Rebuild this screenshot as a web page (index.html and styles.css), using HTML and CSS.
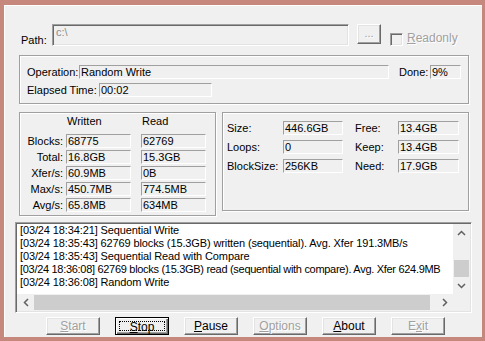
FILE: index.html
```html
<!DOCTYPE html>
<html lang="en">
<head>
    <meta charset="UTF-8">
    <title>H2testw</title>
    <link rel="stylesheet" href="styles.css">
</head>
<body>
    <div class="frame">
        <div class="dialog">
            <div class="path-row">
                <span class="path-label">Path:</span>
                <div class="path-input">c:\</div>
                <div class="btn btn-browse disabled">...</div>
                <span class="check"></span>
                <span class="check-label disabled"><u>R</u>eadonly</span>
            </div>

            <div class="group group-op">
                <div class="op-row">
                    <span class="lbl-op">Operation:</span>
                    <span class="field field-op">Random Write</span>
                    <span class="lbl-done">Done:</span>
                    <span class="field field-done">9%</span>
                </div>
                <div class="op-row second">
                    <span class="lbl-elapsed">Elapsed Time:</span>
                    <span class="field field-elapsed">00:02</span>
                </div>
            </div>

            <div class="groups">
                <div class="group group-stats">
                    <span></span>
                    <span class="head">Written</span>
                    <span class="head">Read</span>

                    <span class="lbl">Blocks:</span>
                    <span class="field">68775</span>
                    <span class="field">62769</span>

                    <span class="lbl">Total:</span>
                    <span class="field">16.8GB</span>
                    <span class="field">15.3GB</span>

                    <span class="lbl">Xfer/s:</span>
                    <span class="field">60.9MB</span>
                    <span class="field">0B</span>

                    <span class="lbl">Max/s:</span>
                    <span class="field">450.7MB</span>
                    <span class="field">774.5MB</span>

                    <span class="lbl">Avg/s:</span>
                    <span class="field">65.8MB</span>
                    <span class="field">634MB</span>
                </div>

                <div class="group group-disk">
                    <span class="lbl">Size:</span>
                    <span class="field">446.6GB</span>
                    <span class="lbl">Free:</span>
                    <span class="field">13.4GB</span>

                    <span class="lbl">Loops:</span>
                    <span class="field">0</span>
                    <span class="lbl">Keep:</span>
                    <span class="field">13.4GB</span>

                    <span class="lbl">BlockSize:</span>
                    <span class="field">256KB</span>
                    <span class="lbl">Need:</span>
                    <span class="field">17.9GB</span>
                </div>
            </div>

            <div class="log">
                <div class="log-text">
                    <div>[03/24 18:34:21] Sequential Write</div>
                    <div>[03/24 18:35:43] 62769 blocks (15.3GB) written (sequential). Avg. Xfer 191.3MB/s</div>
                    <div>[03/24 18:35:43] Sequential Read with Compare</div>
                    <div class="long">[03/24 18:36:08] 62769 blocks (15.3GB) read (sequential with compare). Avg. Xfer 624.9MB</div>
                    <div>[03/24 18:36:08] Random Write</div>
                </div>
                <div class="vscroll">
                    <div class="arrow">
                        <svg width="9" height="6" viewBox="0 0 9 6"><polyline points="1,5 4.5,1.5 8,5" fill="none" stroke="#606060" stroke-width="1.5"/></svg>
                    </div>
                    <div class="vtrack"><div class="vthumb"></div></div>
                    <div class="arrow">
                        <svg width="9" height="6" viewBox="0 0 9 6"><polyline points="1,1 4.5,4.5 8,1" fill="none" stroke="#606060" stroke-width="1.5"/></svg>
                    </div>
                </div>
                <div class="hscroll">
                    <div class="arrow">
                        <svg width="6" height="9" viewBox="0 0 6 9"><polyline points="5,1 1.5,4.5 5,8" fill="none" stroke="#606060" stroke-width="1.5"/></svg>
                    </div>
                    <div class="htrack"><div class="hthumb"></div></div>
                    <div class="arrow">
                        <svg width="6" height="9" viewBox="0 0 6 9"><polyline points="1,1 4.5,4.5 1,8" fill="none" stroke="#606060" stroke-width="1.5"/></svg>
                    </div>
                </div>
                <div class="corner"></div>
            </div>

            <div class="buttons">
                <div class="btn disabled"><u>S</u>tart</div>
                <div class="btn default"><span class="focus"><u>S</u>top</span></div>
                <div class="btn"><u>P</u>ause</div>
                <div class="btn disabled"><u>O</u>ptions</div>
                <div class="btn"><u>A</u>bout</div>
                <div class="btn disabled">E<u>x</u>it</div>
            </div>
        </div>
    </div>
</body>
</html>
```

FILE: styles.css
```css
body {
    margin: 0;
    background: #c6877d;
    font-family: "Liberation Sans", Arial, sans-serif;
    font-size: 11px;
    color: #000;
}
.frame {
    height: 341px;
    padding: 5px 3px 4px 4px;
    box-sizing: border-box;
}
.dialog {
    height: 100%;
    background: #f0f0f0;
    border-top: 1px solid #fff;
    border-left: 1px solid #fff;
    box-sizing: border-box;
    padding: 18px 0 0 10px;
}
.disabled {
    color: #a0a0a0;
    text-shadow: 1px 1px #fff;
}

/* buttons */
.buttons {
    display: flex;
    gap: 15px;
    margin: 4px 0 0 31px;
}
.btn {
    width: 54px;
    height: 18px;
    box-sizing: border-box;
    border: 1px solid;
    border-color: #fff #696969 #696969 #fff;
    box-shadow: inset -1px -1px #a0a0a0, inset 1px 1px #e3e3e3;
    text-align: center;
    line-height: 16px;
    font-size: 12px;
}
.btn.default {
    border: 1px solid #000;
    box-shadow: inset 1px 1px #fff, inset -1px -1px #696969, inset -2px -2px #a0a0a0;
    padding: 3px;
    line-height: 10px;
}
.btn .focus {
    display: block;
    height: 100%;
    box-sizing: border-box;
    border: 1px dotted #000;
}

/* path line */
.path-row {
    display: flex;
    align-items: flex-start;
    height: 22px;
    margin-left: 4px;
}
.path-label {
    width: 31px;
    padding: 10px 0 0 2px;
    line-height: 13px;
}
.path-input {
    width: 297px;
    height: 22px;
    box-sizing: border-box;
    border: 1px solid;
    border-color: #a0a0a0 #fff #fff #a0a0a0;
    box-shadow: inset 1px 1px #696969, inset -1px -1px #e3e3e3;
    color: #8c8c8c;
    padding: 1px 3px;
    line-height: 13px;
}
.path-row .btn-browse {
    margin-left: 8px;
    width: 24px;
    height: 20px;
    line-height: 16px;
    font-size: 11px;
}
.check {
    margin: 9px 0 0 9px;
    width: 13px;
    height: 13px;
    box-sizing: border-box;
    border: 1px solid;
    border-color: #a0a0a0 #fff #fff #a0a0a0;
    box-shadow: inset 1px 1px #696969, inset -1px -1px #e3e3e3;
}
.check-label {
    margin: 8px 0 0 4px;
    line-height: 13px;
    font-size: 12px;
}

/* group boxes */
.group {
    border: 1px solid #a0a0a0;
    box-shadow: inset 1px 1px #fff, 1px 1px #fff;
    box-sizing: border-box;
}
.field {
    height: 14px;
    box-sizing: border-box;
    border: 1px solid;
    border-color: #a0a0a0 #fff #fff #a0a0a0;
    line-height: 12px;
    padding-left: 1px;
    white-space: nowrap;
    overflow: hidden;
}
.group-op {
    margin: 9px 0 0 4px;
    width: 450px;
    height: 49px;
    padding: 9px 0 0 7px;
}
.op-row {
    display: flex;
    align-items: center;
    height: 14px;
}
.op-row.second {
    margin-top: 4px;
}
.lbl-op {
    width: 52px;
}
.field-op {
    width: 310px;
}
.lbl-done {
    width: 31px;
    margin-left: 10px;
}
.field-done {
    width: 31px;
}
.lbl-elapsed {
    width: 72px;
}
.field-elapsed {
    width: 113px;
}

.groups {
    display: flex;
    align-items: flex-start;
    gap: 6px;
    margin: 8px 0 0 4px;
}
.group-stats {
    width: 197px;
    height: 104px;
    padding-top: 2px;
    display: grid;
    grid-template-columns: 46px 75px 65px;
    grid-template-rows: 17px repeat(5, 14px);
    row-gap: 2px;
    align-items: center;
}
.group-stats .head {
    align-self: start;
    line-height: 13px;
    padding-left: 1px;
}
.group-stats .lbl {
    text-align: right;
    padding-right: 3px;
}
.group-stats .field:nth-child(3n+2) {
    width: 65px;
}
.group-disk {
    width: 247px;
    height: 99px;
    padding: 8px 0 0 4px;
    display: grid;
    grid-template-columns: 56px 72px 43px 61px;
    grid-template-rows: repeat(3, 14px);
    row-gap: 5px;
    align-items: center;
}
.group-disk .field:nth-child(4n+2) {
    width: 60px;
}

/* log window */
.log {
    margin-top: 6px;
    width: 457px;
    height: 91px;
    box-sizing: border-box;
    border: 1px solid;
    border-color: #a0a0a0 #fff #fff #a0a0a0;
    box-shadow: inset 1px 1px #696969, inset -1px -1px #e3e3e3;
    padding: 1px;
    background: #fff;
    display: grid;
    grid-template-columns: 1fr 17px;
    grid-template-rows: 1fr 17px;
}
.log-text {
    padding-left: 3px;
    line-height: 13px;
    letter-spacing: -0.12px;
    white-space: nowrap;
    overflow: hidden;
}
.log-text .long {
    letter-spacing: -0.3px;
}
.vscroll {
    display: flex;
    flex-direction: column;
    background: #f0f0f0;
}
.hscroll {
    display: flex;
    background: #f0f0f0;
}
.arrow {
    width: 17px;
    height: 17px;
    display: flex;
    align-items: center;
    justify-content: center;
    flex-shrink: 0;
}
.vtrack {
    flex: 1;
    padding-top: 19px;
}
.vthumb {
    height: 17px;
    margin: 0 1px;
    background: #cdcdcd;
}
.htrack {
    flex: 1;
    padding: 0 6px 0 0;
}
.hthumb {
    height: 15px;
    margin-top: 1px;
    background: #cdcdcd;
}
.corner {
    background: #f0f0f0;
}
```
